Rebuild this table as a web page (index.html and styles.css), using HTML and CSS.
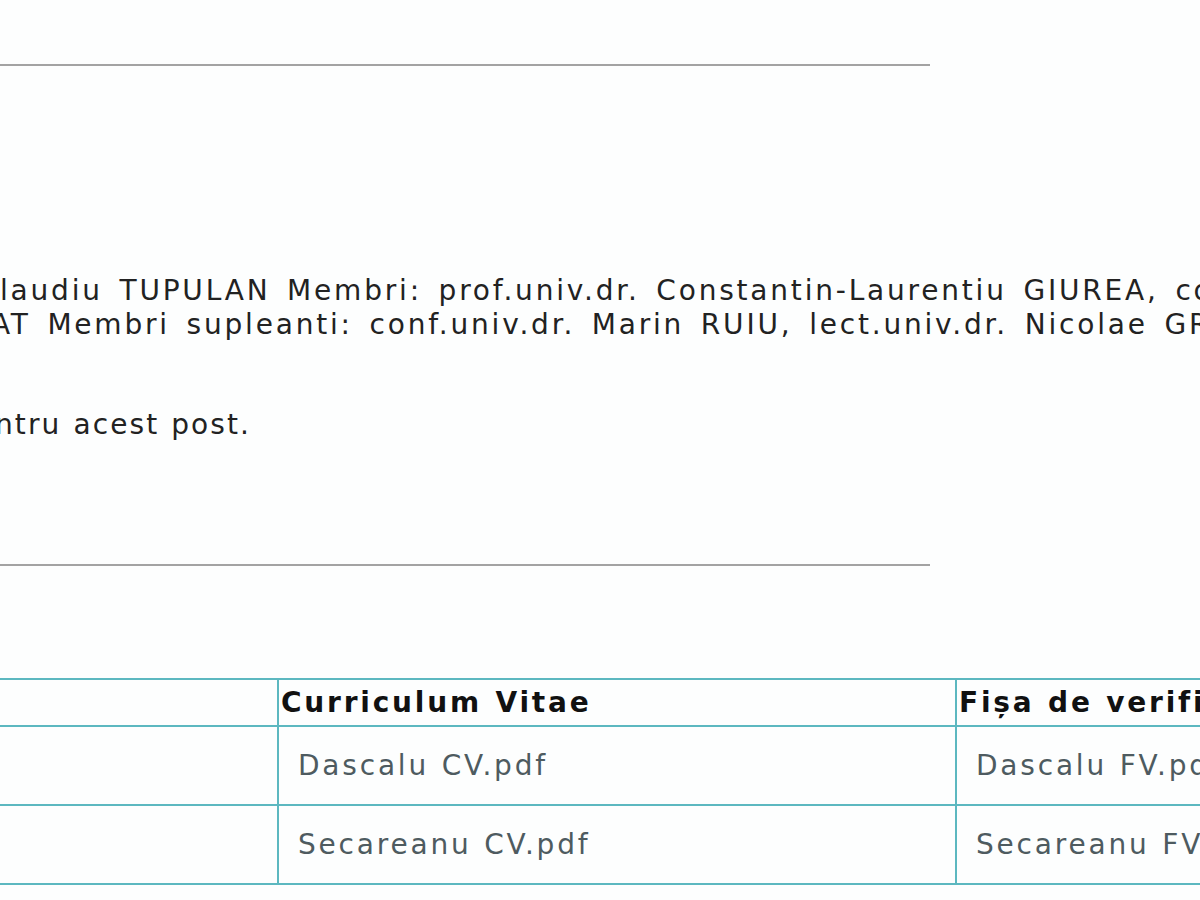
FILE: index.html
```html
<!DOCTYPE html>
<html lang="ro">
<head>
<meta charset="utf-8">
<title>Concurs post</title>
<link rel="stylesheet" href="styles.css">
</head>
<body>
<div class="page">
  <div class="rule rule-top"></div>
  <div class="committee">
    <p class="line">laudiu TUPULAN Membri: prof.univ.dr. Constantin-Laurentiu GIUREA, conf.univ.dr.</p>
    <p class="line line-cut">AT Membri supleanti: conf.univ.dr. Marin RUIU, lect.univ.dr. Nicolae GROSU</p>
  </div>
  <p class="line note">ntru acest post.</p>
  <div class="rule rule-bottom"></div>
  <table class="docs">
    <tr>
      <th class="col-name"></th>
      <th class="col-cv">Curriculum Vitae</th>
      <th class="col-fv">Fișa de verificare</th>
    </tr>
    <tr>
      <td class="col-name"></td>
      <td><a href="#">Dascalu CV.pdf</a></td>
      <td><a href="#">Dascalu FV.pdf</a></td>
    </tr>
    <tr>
      <td class="col-name"></td>
      <td><a href="#">Secareanu CV.pdf</a></td>
      <td><a href="#">Secareanu FV.pdf</a></td>
    </tr>
  </table>
</div>
</body>
</html>
```
FILE: styles.css
```css
html, body {
  margin: 0;
  padding: 0;
  background: #fdfefe;
  overflow: hidden;
  width: 1200px;
  height: 900px;
}
.page {
  font-family: "DejaVu Sans", Verdana, sans-serif;
  font-size: 28px;
  letter-spacing: 2.8px;
  word-spacing: 1px;
  color: #222;
  padding-top: 64px;
}
.rule {
  width: 930px;
  height: 2px;
  background: #a3a3a3;
}
.committee {
  margin-top: 208px;
  word-spacing: 5px;
}
.line {
  margin: 0;
  white-space: nowrap;
  line-height: 34px;
}
.line-cut {
  margin-left: -9px;
}
.note {
  margin-top: 66px;
  margin-left: -5px;
  letter-spacing: 2.1px;
}
.rule-bottom {
  margin-top: 122px;
}
.docs {
  margin-top: 112px;
  margin-left: -2px;
  border-collapse: collapse;
  width: 1500px;
  table-layout: fixed;
}
.docs th, .docs td {
  border: 2px solid #5cb8c0;
  text-align: left;
  padding: 0;
}
.docs th {
  height: 45px;
  font-weight: bold;
  color: #111;
  padding-left: 2px;
}
.docs td {
  height: 77px;
  padding-left: 19px;
}
.docs .col-name { width: 277px; padding: 0; }
.docs .col-cv { width: 674px; }
.docs a {
  color: #4e5b60;
  text-decoration: none;
}
```
